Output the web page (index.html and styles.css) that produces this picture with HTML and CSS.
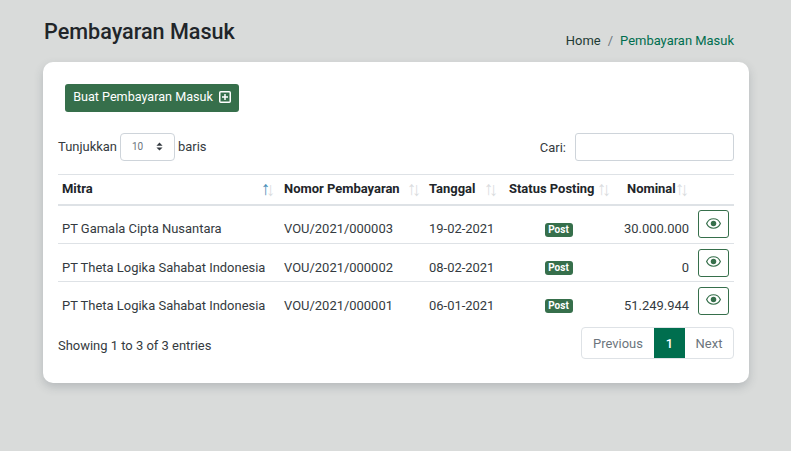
FILE: index.html
```html
<!DOCTYPE html>
<html lang="id">
<head>
<meta charset="utf-8">
<title>Pembayaran Masuk</title>
<link rel="stylesheet" href="styles.css">
</head>
<body>
<div class="page">
  <header class="page-head">
    <h1 class="title">Pembayaran Masuk</h1>
    <nav class="crumbs"><a class="crumb">Home</a><span class="sep">/</span><span class="crumb-active">Pembayaran Masuk</span></nav>
  </header>
  <section class="card">
    <button class="btn-add">Buat Pembayaran Masuk
      <svg class="plus" viewBox="0 0 12 12" width="12" height="12"><rect x="0.75" y="0.75" width="10.5" height="10.5" rx="1" fill="none" stroke="#fff" stroke-width="1.5"/><path d="M6 3v6M3 6h6" stroke="#fff" stroke-width="1.5"/></svg>
    </button>
    <div class="controls">
      <label class="length">Tunjukkan
        <span class="select">10
          <svg class="updown" viewBox="0 0 8 10" width="7" height="9"><path d="M4 0.5 7.500 4H.5zM4 9.500.5 6h7z" fill="#343a40"/></svg>
        </span>
        baris</label>
      <label class="search">Cari:<span class="input"></span></label>
    </div>
    <table class="grid">
      <colgroup><col class="c1"><col class="c2"><col class="c3"><col class="c4"><col class="c5"><col class="c6"></colgroup>
      <thead>
        <tr>
          <th class="sort asc h-mitra">Mitra</th>
          <th class="sort h-nomor">Nomor Pembayaran</th>
          <th class="sort h-tanggal">Tanggal</th>
          <th class="sort h-status">Status Posting</th>
          <th class="sort h-nominal">Nominal</th>
          <th></th>
        </tr>
      </thead>
      <tbody>
        <tr class="r1">
          <td>PT Gamala Cipta Nusantara</td><td>VOU/2021/000003</td><td>19-02-2021</td>
          <td class="center"><span class="badge">Post</span></td><td class="num">30.000.000</td>
          <td class="act"><button class="btn-eye"><svg viewBox="0 0 16 12" width="15" height="11"><path d="M8 .8C4.600.8 1.800 2.900.5 6c1.300 3.100 4.100 5.200 7.500 5.200s6.200-2.100 7.500-5.200C14.200 2.900 11.400.8 8 .8z" fill="none" stroke="#366f4b" stroke-width="1.300"/><circle cx="8" cy="6" r="3" fill="#366f4b"/></svg></button></td>
        </tr>
        <tr class="r2">
          <td>PT Theta Logika Sahabat Indonesia</td><td>VOU/2021/000002</td><td>08-02-2021</td>
          <td class="center"><span class="badge">Post</span></td><td class="num">0</td>
          <td class="act"><button class="btn-eye"><svg viewBox="0 0 16 12" width="15" height="11"><path d="M8 .8C4.600.8 1.800 2.900.5 6c1.300 3.100 4.100 5.200 7.500 5.200s6.200-2.100 7.500-5.200C14.200 2.900 11.400.8 8 .8z" fill="none" stroke="#366f4b" stroke-width="1.300"/><circle cx="8" cy="6" r="3" fill="#366f4b"/></svg></button></td>
        </tr>
        <tr class="r3">
          <td>PT Theta Logika Sahabat Indonesia</td><td>VOU/2021/000001</td><td>06-01-2021</td>
          <td class="center"><span class="badge">Post</span></td><td class="num">51.249.944</td>
          <td class="act"><button class="btn-eye"><svg viewBox="0 0 16 12" width="15" height="11"><path d="M8 .8C4.600.8 1.800 2.900.5 6c1.300 3.100 4.100 5.200 7.500 5.200s6.200-2.100 7.500-5.200C14.200 2.900 11.400.8 8 .8z" fill="none" stroke="#366f4b" stroke-width="1.300"/><circle cx="8" cy="6" r="3" fill="#366f4b"/></svg></button></td>
        </tr>
      </tbody>
    </table>
    <div class="foot">
      <div class="info">Showing 1 to 3 of 3 entries</div>
      <div class="pager"><span class="pg prev">Previous</span><span class="pg on">1</span><span class="pg next">Next</span></div>
    </div>
  </section>
</div>
</body>
</html>
```
FILE: styles.css
```css
* { box-sizing: border-box; }
html, body { margin: 0; height: 100%; }
body {
  background: #d9dbda;
  font-family: Roboto, "Liberation Sans", sans-serif;
  font-size: 12.96px;
  color: #343a40;
  overflow: hidden;
}
.page { padding: 0 42px 0 43px; }
.page-head {
  height: 62px;
  display: flex;
  justify-content: space-between;
  padding-right: 15px;
}
.title {
  margin: 18px 0 0 1px;
  font-size: 21.6px;
  line-height: 28px;
  font-weight: 500;
  color: #212529;
}
.crumbs {
  margin-top: 32px;
  line-height: 18px;
  display: flex;
}
.crumb { color: #1e3a34; }
.sep { margin: 0 7px; color: #6c757d; }
.crumb-active { color: #006e4e; }
.card {
  height: 321px;
  background: #fff;
  border-radius: 10px;
  box-shadow: 0 4px 10px rgba(60, 70, 80, .22);
  padding: 22px 15px 0;
}
.btn-add {
  margin-left: 7px;
  height: 28px;
  width: 174px;
  display: flex;
  align-items: center;
  justify-content: center;
  gap: 6px;
  padding: 0 0 3px;
  border: 0;
  border-radius: 3px;
  background: #366f4b;
  color: #fff;
  font: 400 12.6px Roboto, sans-serif;
}
.controls {
  display: flex;
  justify-content: space-between;
  align-items: center;
  margin-top: 21px;
  height: 28px;
}
.length, .search { display: flex; align-items: center; }
.length { margin-top: -1px; }
.select {
  width: 55px;
  height: 28px;
  margin: 0 3px;
  border: 1px solid #ced4da;
  border-radius: 4px;
  display: flex;
  align-items: center;
  justify-content: space-between;
  padding: 0 11px;
  font-size: 10px;
  color: #6c757d;
}
.search { gap: 9px; }
.input {
  width: 159px;
  height: 28px;
  border: 1px solid #ced4da;
  border-radius: 3px;
  background: #fff;
}
.grid {
  width: 676px;
  margin-top: 13px;
  border-collapse: separate;
  border-spacing: 0;
  table-layout: fixed;
}
.c1 { width: 222px; }
.c2 { width: 145px; }
.c3 { width: 80px; }
.c4 { width: 117px; }
.c5 { width: 71px; }
.c6 { width: 41px; }
th {
  height: 32px;
  padding: 0 4px 3px;
  border-top: 1px solid #dee2e6;
  border-bottom: 2px solid #dee2e6;
  text-align: left;
  font-weight: 700;
  color: #212529;
  white-space: nowrap;
}
.sort { position: relative; --r: 5px; }
.h-mitra { --r: 6px; }
.h-tanggal { --r: 8px; }
.h-status { --r: 12px; }
.h-nominal { padding-left: 5px; }
.sort::before, .sort::after {
  position: absolute;
  width: 8px;
  text-align: center;
  top: 2px;
  font-family: "Liberation Sans", sans-serif;
  font-size: 19px;
  line-height: 24px;
  font-weight: 400;
  opacity: .3;
  color: #8a9299;
}
.sort::before { content: "\2191"; right: calc(var(--r) + 5px); }
.sort::after { content: "\2193"; right: var(--r); top: 3px; }
.asc::before { opacity: 1; color: #4a90b8; }
td {
  height: 38px;
  padding: 15px 4px 0;
  vertical-align: top;
  border-bottom: 1px solid #dee2e6;
  color: #343a40;
  white-space: nowrap;
}
.r2 td, .r3 td { padding-top: 16px; }
.r3 td { border-bottom: 0; }
td.center { text-align: center; padding: 17px 10px 0 0; }
td.num { text-align: right; padding-left: 0; }
td.act { padding: 5px 5px 0; }
.badge {
  display: block;
  width: 28px;
  height: 14px;
  margin: 0 auto;
  line-height: 14px;
  border-radius: 3px;
  background: #366f4b;
  color: #fff;
  font-size: 10px;
  font-weight: 700;
  text-align: center;
}
.btn-eye {
  width: 31px;
  height: 28px;
  padding: 0 0 4px;
  border: 1px solid #366f4b;
  border-radius: 3px;
  background: #fff;
  display: flex;
  align-items: center;
  justify-content: center;
}
.r1 td.act { padding-top: 4px; }
.r1 .btn-eye { padding-bottom: 2px; }
.foot {
  display: flex;
  justify-content: space-between;
  align-items: flex-start;
  margin-top: 7px;
}
.info { margin-top: 11px; line-height: 15px; }
.pager {
  display: flex;
  height: 32px;
  border: 1px solid #dee2e6;
  border-radius: 4px;
  color: #6c757d;
  overflow: hidden;
}
.pg { display: flex; align-items: center; justify-content: center; }
.prev { width: 72px; }
.on { width: 31px; background: #006e4e; color: #fff; font-weight: 500; }
.next { width: 48px; }
```
